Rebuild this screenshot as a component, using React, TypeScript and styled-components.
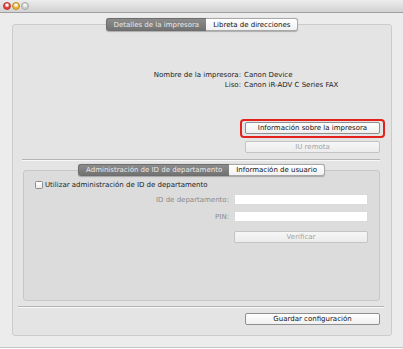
import React from 'react';
import styled, { createGlobalStyle } from 'styled-components';

const Global = createGlobalStyle`
  html, body { margin: 0; padding: 0; background: #ffffff; }
  body {
    font-family: "DejaVu Sans", "Liberation Sans", sans-serif;
    font-size: 7px;
    color: #1c1c1c;
  }
  * { box-sizing: border-box; }
`;

const Window = styled.div`
  width: 403px;
  height: 348px;
  display: flex;
  flex-direction: column;
  background: #ececec;
  border-bottom: 1px solid #c4c4c4;
`;

const TitleBar = styled.div`
  height: 13px;
  flex: none;
  display: flex;
  align-items: center;
  gap: 1px;
  padding-left: 3px;
  background: linear-gradient(#ececec, #d2d2d2);
  border-bottom: 1px solid #9f9f9f;
`;

const Light = styled.span<{ $c: string; $e: string }>`
  width: 8px;
  height: 8px;
  border-radius: 50%;
  background: radial-gradient(circle at 50% 35%, #ffffffaa 0 1px, ${(p) => p.$c} 2.5px);
  border: 0.5px solid ${(p) => p.$e};
`;

const Content = styled.div`
  flex: 1;
  display: flex;
  flex-direction: column;
  padding: 5px 11px 11px 12px;
`;

const TabGroup = styled.div<{ $mx?: string }>`
  display: flex;
  flex-direction: column;
  flex: 1;
  margin: ${(p) => p.$mx || '0'};
`;

const TabBar = styled.div<{ $h: number; $overlap: number }>`
  align-self: center;
  display: flex;
  height: ${(p) => p.$h}px;
  margin-bottom: -${(p) => p.$overlap}px;
  z-index: 1;
  border-radius: 3px;
  box-shadow: 0 0.5px 1px rgba(0, 0, 0, 0.25);
`;

const Tab = styled.div<{ $active?: boolean }>`
  display: flex;
  align-items: center;
  padding: 0 7px;
  white-space: nowrap;
  border: 1px solid ${(p) => (p.$active ? '#6e6e6e' : '#a8a8a8')};
  background: ${(p) =>
    p.$active ? 'linear-gradient(#8c8c8c, #737373)' : 'linear-gradient(#ffffff, #f1f1f1)'};
  color: ${(p) => (p.$active ? '#e9e9e9' : '#111111')};
  &:first-child { border-radius: 3px 0 0 3px; border-right: none; }
  &:last-child { border-radius: 0 3px 3px 0; border-left: none; }
`;

const GroupBox = styled.div<{ $bg: string; $border: string }>`
  flex: 1;
  display: flex;
  flex-direction: column;
  background: ${(p) => p.$bg};
  border: 1px solid ${(p) => p.$border};
  border-radius: 3px;
`;

const InfoGrid = styled.div`
  margin-top: 46px;
  display: grid;
  grid-template-columns: 228px auto;
  column-gap: 3px;
  line-height: 9.5px;
`;

const InfoLabel = styled.div`
  text-align: right;
`;

const InfoValue = styled.div``;

const ButtonStack = styled.div`
  align-self: flex-end;
  margin-top: 29px;
  margin-right: 6px;
  display: flex;
  flex-direction: column;
  align-items: center;
`;

const Highlight = styled.div`
  border: 2px solid #e3211d;
  border-radius: 4px;
  padding: 1px 3px 2px;
`;

const Button = styled.div<{ $disabled?: boolean; $w?: number }>`
  width: ${(p) => p.$w || 135}px;
  height: 12px;
  display: flex;
  align-items: center;
  justify-content: center;
  border: 1px solid ${(p) => (p.$disabled ? '#c4c4c4' : '#8f8f8f')};
  border-radius: 2px;
  background: ${(p) =>
    p.$disabled ? 'linear-gradient(#f6f6f6, #ececec)' : 'linear-gradient(#ffffff, #f0f0f0)'};
  color: ${(p) => (p.$disabled ? '#a3a3a3' : '#111111')};
  white-space: nowrap;
`;

const Spacer = styled.div<{ $h: number }>`
  height: ${(p) => p.$h}px;
`;

const Separator = styled.div<{ $m: string }>`
  height: 1px;
  flex: none;
  margin: ${(p) => p.$m};
  background: #b4b4b4;
  box-shadow: 0 1px 0 #f7f7f7;
`;

const CheckRow = styled.label`
  display: flex;
  align-items: center;
  gap: 2px;
  height: 9px;
  margin: 9px 0 0 11px;
`;

const Checkbox = styled.span`
  width: 8px;
  height: 8px;
  border: 1px solid #8c8c8c;
  border-radius: 1.5px;
  background: linear-gradient(#ffffff, #ececec);
`;

const FieldGrid = styled.div`
  margin: 5px 11px 0 0;
  display: grid;
  grid-template-columns: 1fr 134px;
  column-gap: 5px;
  row-gap: 6px;
  align-items: center;
`;

const FieldLabel = styled.div`
  text-align: right;
  color: #8b8b8b;
`;

const Input = styled.div`
  height: 11px;
  background: #ffffff;
  border: 1px solid #dadada;
`;

const VerifyCell = styled.div`
  grid-column: 2;
  margin-top: 3px;
`;

const Footer = styled.div`
  align-self: flex-end;
  margin: 6px 11px 10px 0;
`;

export default function App() {
  return (
    <>
      <Global />
      <Window>
        <TitleBar>
          <Light $c="#e9423b" $e="#b5302a" />
          <Light $c="#f0b330" $e="#c08a20" />
          <Light $c="#cfcfcf" $e="#a8a8a8" />
        </TitleBar>
        <Content>
          <TabGroup>
            <TabBar $h={13} $overlap={7}>
              <Tab $active>Detalles de la impresora</Tab>
              <Tab>Libreta de direcciones</Tab>
            </TabBar>
            <GroupBox $bg="#e4e4e4" $border="#cbcbcb">
              <InfoGrid>
                <InfoLabel>Nombre de la impresora:</InfoLabel>
                <InfoValue>Canon Device</InfoValue>
                <InfoLabel>Liso:</InfoLabel>
                <InfoValue>Canon iR-ADV C Series FAX</InfoValue>
              </InfoGrid>
              <ButtonStack>
                <Highlight>
                  <Button>Información sobre la impresora</Button>
                </Highlight>
                <Spacer $h={3} />
                <Button $disabled>IU remota</Button>
              </ButtonStack>
              <Separator $m="6px 11px 0 9px" />
              <TabGroup $mx="4px 11px 0 10px">
                <TabBar $h={12} $overlap={6}>
                  <Tab $active>Administración de ID de departamento</Tab>
                  <Tab>Información de usuario</Tab>
                </TabBar>
                <GroupBox $bg="#dcdcdc" $border="#c7c7c7">
                  <CheckRow>
                    <Checkbox />
                    Utilizar administración de ID de departamento
                  </CheckRow>
                  <FieldGrid>
                    <FieldLabel>ID de departamento:</FieldLabel>
                    <Input />
                    <FieldLabel>PIN:</FieldLabel>
                    <Input />
                    <VerifyCell>
                      <Button $disabled $w={134}>Verificar</Button>
                    </VerifyCell>
                  </FieldGrid>
                </GroupBox>
              </TabGroup>
              <Separator $m="5px 7px 0 5px" />
              <Footer>
                <Button>Guardar configuración</Button>
              </Footer>
            </GroupBox>
          </TabGroup>
        </Content>
      </Window>
    </>
  );
}
